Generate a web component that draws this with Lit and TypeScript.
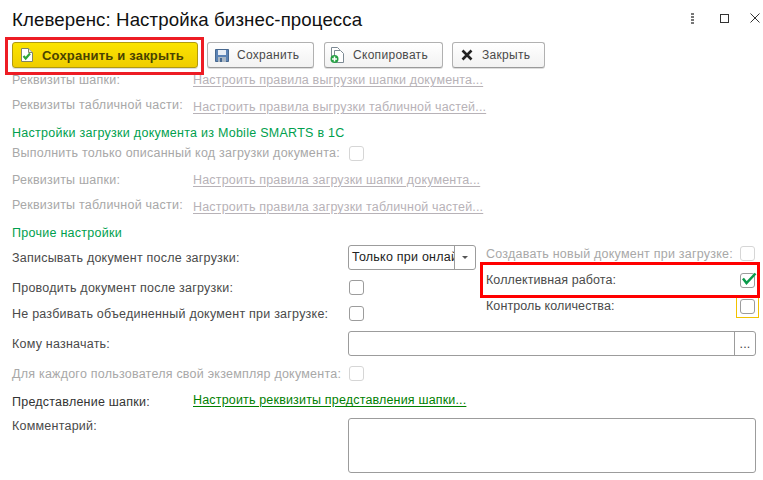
import { LitElement, html, css } from "lit";
import { customElement } from "lit/decorators.js";

@customElement("app-root")
export class AppRoot extends LitElement {
  static styles = css`
    :host { display: block; width: 763px; height: 480px; background: #fff; overflow: hidden; font-family: "Liberation Sans", Arial, sans-serif; font-size: 12.5px; color: #4a4a4a; letter-spacing: 0.23px; }
    * { box-sizing: border-box; }
    .head { height: 38px; display: flex; align-items: center; padding: 2px 3px 0 12px; }
    .title { flex: 1; font-size: 18.67px; color: #111; letter-spacing: 0.1px; white-space: nowrap; }
    .wins { display: flex; align-items: center; margin-top: -4px; }
    .dots { width: 3px; height: 11px; margin-right: 26px; display: flex; flex-direction: column; justify-content: space-between; }
    .dots i { width: 3px; height: 2px; background: #777; }
    .maxi { width: 9px; height: 9px; border: 1px solid #333; margin-right: 21px; }
    .toolbar { height: 37px; display: flex; align-items: flex-start; padding: 4px 0 0 12px; position: relative; }
    .btn { height: 26px; display: flex; align-items: center; border: 1px solid #b1b1b1; border-bottom-color: #9a9a9a; border-radius: 3px; background: linear-gradient(#ffffff, #f2f2f2); color: #4a4a4a; white-space: nowrap; box-shadow: 0 1px 0 #ddd; font-size: 12px; letter-spacing: 0.3px; }
    .btn svg { flex: none; }
    .primary { width: 186px; padding-left: 8px; margin-right: 9px; background: linear-gradient(#fbe400, #efcd00); border-color: #b09a10; color: #4a4300; font-weight: bold; font-size: 13px; letter-spacing: 0.2px; gap: 9px; }
    .save { width: 107px; padding-left: 7px; gap: 8px; margin-right: 10px; }
    .copy { width: 119px; padding-left: 5px; gap: 9px; margin-right: 9px; }
    .close { width: 93px; padding-left: 8px; gap: 9px; }
    .mark { position: absolute; border: 3px solid #ed1c24; pointer-events: none; }
    .mark-save { left: 5px; top: -1px; width: 199px; height: 38px; }
    .form { display: flex; flex-direction: column; padding-left: 12px; }
    .row { display: flex; align-items: center; white-space: nowrap; }
    .col-lbl { width: 181px; flex: none; }
    .off { color: #a8a8a8; }
    .lnk { text-decoration: underline; text-underline-offset: 2px; letter-spacing: 0.17px; }
    .lnk.off { color: #b7b2b7; }
    .lnk.on { color: #008000; }
    .dn { margin-top: 5px; }
    .sec { color: #00a04e; letter-spacing: 0.27px; }
    .dark { color: #333; }
    .up { margin-top: 3px; }
    .r-clip { height: 17px; align-items: flex-start; overflow: hidden; }
    .r-clip > * { line-height: 13px; position: relative; top: -1px; }
    .h17 { height: 17px; }
    .h21 { height: 21px; align-items: flex-start; }
    .h25 { height: 25px; }
    .h28 { height: 28px; padding-top: 4px; }
    .h29 { height: 29px; padding-top: 2px; }
    .h35 { height: 35px; }
    .h36 { height: 36px; }
    .h43 { height: 43px; }
    .lbl-wide { width: 336px; flex: none; }
    .lbl-wide + .cb { margin-left: 1px; }
    .cb { width: 15px; height: 15px; border: 1px solid #9c9c9c; border-radius: 3px; background: #fff; flex: none; position: relative; }
    .cb.dis { border-color: #d6d6d6; }
    .cb svg { position: absolute; left: 0; top: -2px; overflow: visible; }
    .mid { display: flex; align-items: flex-start; }
    .mid-left { width: 469px; flex: none; display: flex; flex-direction: column; }
    .mid-right { width: 282px; flex: none; padding: 0 8px 0 5px; display: flex; flex-direction: column; position: relative; }
    .right-row { display: flex; align-items: center; justify-content: space-between; }
    .tight { letter-spacing: 0.09px; }
    .r-17 { height: 17px; }
    .r-36 { height: 36px; }
    .r-16 { height: 16px; }
    .mark-k { position: absolute; left: -1px; top: 17px; width: 280px; height: 36px; border: 3px solid #f00; }
    .cbw { position: relative; display: flex; }
    .focusbox { position: absolute; left: -4px; top: -4px; width: 23px; height: 23px; border: 1px solid #f2c200; }
    .select { width: 128px; height: 25px; border: 1px solid #9c9c9c; border-radius: 3px; display: flex; flex: none; color: #222; }
    .select span { flex: 1; overflow: hidden; padding-left: 3px; line-height: 23px; white-space: nowrap; }
    .select b { width: 21px; border-left: 1px solid #9c9c9c; display: flex; align-items: center; justify-content: center; flex: none; }
    .select b i { width: 0; height: 0; border: 3px solid transparent; border-top: 3px solid #555; border-bottom: 0; }
    .input { width: 408px; height: 25px; border: 1px solid #9c9c9c; border-radius: 3px; display: flex; justify-content: flex-end; flex: none; }
    .input b { width: 21px; border-left: 1px solid #9c9c9c; font-weight: normal; color: #444; display: flex; align-items: center; justify-content: center; }
    .area { width: 408px; height: 55px; border: 1px solid #9c9c9c; border-radius: 3px; flex: none; }
    .top { align-items: flex-start; }
    .top .lbl-wide { line-height: 16px; }
  `;

  render() {
    return html`
      <div class="head">
        <div class="title">Клеверенс: Настройка бизнес-процесса</div>
        <div class="wins">
          <div class="dots"><i></i><i></i><i></i><i></i></div>
          <div class="maxi"></div>
          <svg width="10" height="10" viewBox="0 0 10 10"><path d="M.5.5l9 9M9.500.5l-9 9" stroke="#333" fill="none"/></svg>
        </div>
      </div>
      <div class="toolbar">
        <div class="btn primary">
          <svg width="12" height="14" viewBox="0 0 12 14"><path d="M.5.5h7l4 4v9H.5z" fill="#fff" stroke="#7f8468"/><path d="M7.500.5v4h4" fill="#e8e8d8" stroke="#7f8468"/><path d="M2.500 8l2.200 2.500 4.300-5" fill="none" stroke="#2da83a" stroke-width="2.200"/></svg>
          <span>Сохранить и закрыть</span>
        </div>
        <div class="btn save">
          <svg width="14" height="13" viewBox="0 0 14 13"><path d="M.5.5h13v12H.5z" fill="#5b83b5" stroke="#47688f"/><path d="M3 1h8v5H3z" fill="#e8eef5"/><path d="M3 8h8v5H3z" fill="#aab7c4"/><path d="M5 9h2v4H5z" fill="#47688f"/></svg>
          <span>Сохранить</span>
        </div>
        <div class="btn copy">
          <svg width="14" height="16" viewBox="0 0 14 16"><path d="M1.500.5h6l2 2v9h-8z" fill="#fff" stroke="#7d8a94"/><path d="M4.500 3.500h6l3 3v9h-9z" fill="#fff" stroke="#7d8a94"/><circle cx="4.500" cy="12" r="4" fill="#27a045"/><path d="M4.500 9.500v5M2 12h5" stroke="#fff" stroke-width="1.500"/></svg>
          <span>Скопировать</span>
        </div>
        <div class="btn close">
          <svg width="12" height="12" viewBox="0 0 12 12"><path d="M1.500 1.500l9 9M10.500 1.500l-9 9" stroke="#222" stroke-width="2.600" fill="none"/></svg>
          <span>Закрыть</span>
        </div>
        <div class="mark mark-save"></div>
      </div>
      <div class="form">
        <div class="row r-clip"><span class="col-lbl off">Реквизиты шапки:</span><span class="lnk off">Настроить правила выгрузки шапки документа...</span></div>
        <div class="row h25"><span class="col-lbl off">Реквизиты табличной части:</span><span class="lnk off dn">Настроить правила выгрузки табличной частей...</span></div>
        <div class="row h29"><span class="sec">Настройки загрузки документа из Mobile SMARTS в 1С</span></div>
        <div class="row h21"><span class="off lbl-wide">Выполнить только описанный код загрузки документа:</span><span class="cb dis"></span></div>
        <div class="row h25"><span class="col-lbl off">Реквизиты шапки:</span><span class="lnk off">Настроить правила загрузки шапки документа...</span></div>
        <div class="row h25"><span class="col-lbl off">Реквизиты табличной части:</span><span class="lnk off dn">Настроить правила загрузки табличной частей...</span></div>
        <div class="row h28"><span class="sec">Прочие настройки</span></div>
        <div class="mid">
          <div class="mid-left">
            <div class="row h25"><span class="lbl-wide">Записывать документ после загрузки:</span><div class="select"><span>Только при онлайн</span><b><i></i></b></div></div>
            <div class="row h35"><span class="lbl-wide">Проводить документ после загрузки:</span><span class="cb"></span></div>
            <div class="row h17"><span class="lbl-wide">Не разбивать объединенный документ при загрузке:</span><span class="cb"></span></div>
          </div>
          <div class="mid-right">
            <div class="right-row r-17"><span class="off">Создавать новый документ при загрузке:</span><span class="cb dis"></span></div>
            <div class="right-row r-36"><span class="tight">Коллективная работа:</span><span class="cb"><svg width="16" height="13" viewBox="0 0 16 13"><path d="M2 6.500l3.500 4.500 9-9.500" fill="none" stroke="#0a9a4a" stroke-width="2.500"/></svg></span></div>
            <div class="right-row r-16"><span class="tight">Контроль количества:</span><span class="cbw"><span class="cb"></span><span class="focusbox"></span></span></div>
            <div class="mark-k"></div>
          </div>
        </div>
        <div class="row h43"><span class="lbl-wide">Кому назначать:</span><div class="input"><b>...</b></div></div>
        <div class="row h17"><span class="off lbl-wide">Для каждого пользователя свой экземпляр документа:</span><span class="cb dis"></span></div>
        <div class="row h36"><span class="col-lbl dark up">Представление шапки:</span><span class="lnk on">Настроить реквизиты представления шапки...</span></div>
        <div class="row top"><span class="lbl-wide">Комментарий:</span><div class="area"></div></div>
      </div>
    `;
  }
}
